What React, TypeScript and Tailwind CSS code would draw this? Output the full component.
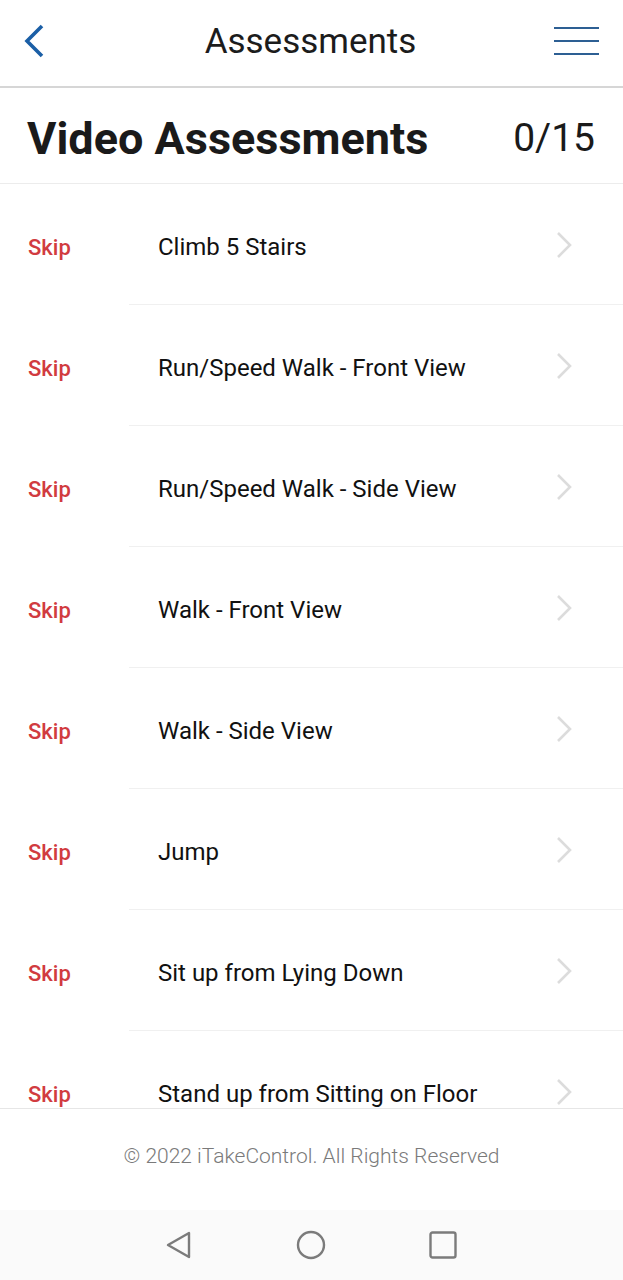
const items = [
  'Climb 5 Stairs',
  'Run/Speed Walk - Front View',
  'Run/Speed Walk - Side View',
  'Walk - Front View',
  'Walk - Side View',
  'Jump',
  'Sit up from Lying Down',
  'Stand up from Sitting on Floor',
];

export default function App() {
  return (
    <div className="flex h-[1280px] w-[623px] flex-col bg-white font-['Roboto',sans-serif] text-[#111]">
      <header className="grid h-[88px] shrink-0 grid-cols-[1fr_auto_1fr] items-center border-b-2 border-[#d6d6d6] pl-[22px] pr-[24px]">
        <svg width="26" height="36" viewBox="0 0 26 36" className="mb-[4px]">
          <path d="M20 3 L5 18 L20 33" fill="none" stroke="#1b5fa6" strokeWidth="3.6" strokeLinecap="butt" strokeLinejoin="miter" />
        </svg>
        <h1 className="mb-[2px] text-[35px] text-[#1c1c1c]">Assessments</h1>
        <div className="mb-[4px] flex w-[45px] flex-col gap-[11px] justify-self-end">
          <span className="h-[2px] bg-[#2d5f93]" />
          <span className="h-[2px] bg-[#2d5f93]" />
          <span className="h-[2px] bg-[#2d5f93]" />
        </div>
      </header>

      <div className="flex h-[96px] shrink-0 items-center justify-between border-b border-[#ececec] pl-[27px] pr-[28px] pt-[6px]">
        <h2 className="text-[45px] font-bold text-[#1a1a1a]">Video Assessments</h2>
        <span className="text-[39px] text-[#1a1a1a]">0/15</span>
      </div>

      <ul className="flex-1 overflow-hidden">
        {items.map((item) => (
          <li key={item} className="flex h-[121px] items-center">
            <span className="w-[129px] shrink-0 pl-[28px] pt-[5px] text-[22px] font-medium text-[#d13b40]">Skip</span>
            <div className="flex h-full flex-1 items-center justify-between border-b border-[#f0f0f0] pl-[29px] pr-[50px]">
              <span className="pt-[5px] text-[24px]">{item}</span>
              <svg width="18" height="28" viewBox="0 0 18 28" className="mt-[2px]">
                <path d="M3 2 L15 14 L3 26" fill="none" stroke="#dcdcdc" strokeWidth="2.6" />
              </svg>
            </div>
          </li>
        ))}
      </ul>

      <footer className="flex h-[102px] shrink-0 items-center justify-center border-t border-[#e6e6e6] pb-[6px]">
        <p className="text-[21px] font-light text-[#7a7a7a]">© 2022 iTakeControl. All Rights Reserved</p>
      </footer>

      <nav className="flex h-[70px] shrink-0 items-center justify-center gap-[102px] bg-[#fafafa] pr-[2px]">
        <svg width="30" height="30" viewBox="0 0 30 30">
          <path d="M25 3 L25 27 L4 15 Z" fill="none" stroke="#7b7b7b" strokeWidth="2.4" strokeLinejoin="round" />
        </svg>
        <svg width="30" height="30" viewBox="0 0 30 30">
          <circle cx="15" cy="15" r="13" fill="none" stroke="#7b7b7b" strokeWidth="2.4" />
        </svg>
        <svg width="30" height="30" viewBox="0 0 30 30">
          <rect x="2.5" y="2.5" width="25" height="25" rx="2" fill="none" stroke="#7b7b7b" strokeWidth="2.4" />
        </svg>
      </nav>
    </div>
  );
}
